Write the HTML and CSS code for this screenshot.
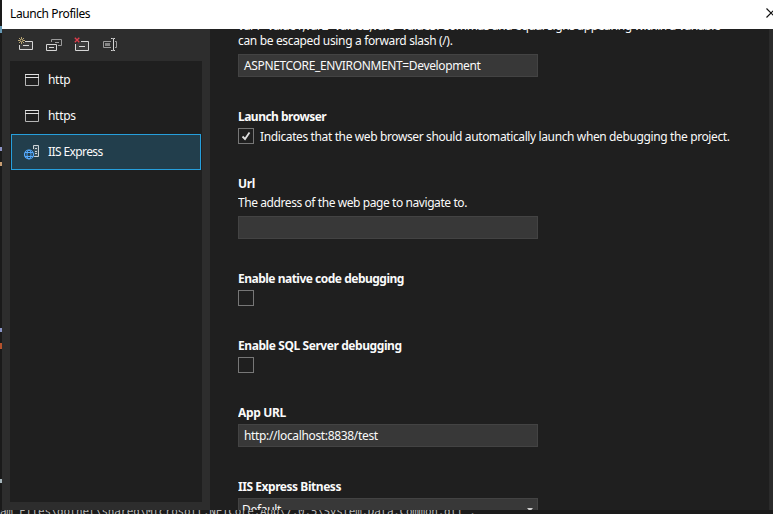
FILE: index.html
```html
<!DOCTYPE html>
<html lang="en">
<head>
<meta charset="utf-8">
<title>Launch Profiles</title>
<link rel="stylesheet" href="styles.css">
</head>
<body>
<div class="edge"><i class="tick t1"></i><i class="tick t2"></i><i class="tick t3"></i><i class="tick t4"></i><i class="tick t5"></i><i class="tick t6"></i></div>
<main class="dialog">
  <header class="titlebar"><span class="title">Launch Profiles</span>
    <svg class="close" width="10" height="10" viewBox="0 0 10 10"><path d="M.5 .5l9 9M9.500 .5l-9 9" stroke="#111" stroke-width="1.200"/></svg>
  </header>
  <div class="content">
    <aside class="sidebar">
      <div class="toolbar">
        <svg width="16" height="16" viewBox="0 0 16 16" fill="none"><path d="M7 4.500h7.500v8H1.500V8" fill="#3b3b3b" stroke="#d6d6d6"/><path d="M5 8.500h6" stroke="#d6d6d6"/><path d="M3.500 0v7M0 3.500h7M1 1l5 5M6 1L1 6" stroke="#dcc487" stroke-width=".8"/><circle cx="3.500" cy="3.500" r="1" fill="#2d2d2d"/></svg>
        <svg width="16" height="16" viewBox="0 0 16 16" fill="none"><path d="M5.500 5V2.500h10v6H12M9 5.500h4" stroke="#9b9b9b"/><path d="M.5 7.500h10v6H.5zM3 10.500h5" fill="#333" stroke="#d6d6d6"/></svg>
        <svg width="16" height="16" viewBox="0 0 16 16" fill="none"><path d="M7 4.500h7.500v9H1.500V7" fill="#3b3b3b" stroke="#d6d6d6"/><path d="M5 9.500h6" stroke="#d6d6d6"/><path d="M.8.8l4.500 4.500M5.300.8L.8 5.300" stroke="#dd3d4c" stroke-width="1.300"/></svg>
        <svg width="16" height="16" viewBox="0 0 16 16" fill="none"><path d="M9 4.500H1.500v6H9M13 4.500h1.500v6H13" stroke="#9b9b9b"/><path d="M3 6h5v3H3z" fill="#858585"/><path d="M9 1.500h1.500l.5.500.500-.5H13M11.500 2v11M9 13.500h1.500l.5-.5.500.5H13" stroke="#d6d6d6"/></svg>
      </div>
      <nav class="profiles">
        <div class="profile"><svg width="16" height="16" viewBox="0 0 16 16" fill="none"><path d="M1.500 2.500h13v11h-13z" stroke="#b5b5b5"/><path d="M1 2.500h14M1 5.500h14" stroke="#e0e0e0"/></svg><span class="http">http</span></div>
        <div class="profile"><svg width="16" height="16" viewBox="0 0 16 16" fill="none"><path d="M1.500 2.500h13v11h-13z" stroke="#b5b5b5"/><path d="M1 2.500h14M1 5.500h14" stroke="#e0e0e0"/></svg><span class="https">https</span></div>
        <div class="profile selected"><svg width="16" height="16" viewBox="0 0 16 16" fill="none"><path d="M9.500 5V1.500h5v11H10" fill="#38505c" stroke="#cdd3d6"/><path d="M11 4.500h2M11 7.500h2M11 9.500h2" stroke="#cdd3d6"/><circle cx="5" cy="10.500" r="5.500" fill="#223e4c"/><circle cx="5" cy="10.500" r="4.500" stroke="#55aaff" stroke-width="1.200"/><ellipse cx="5" cy="10.500" rx="2" ry="4.500" stroke="#55aaff"/><path d="M1 8.500h8M1 12.500h8" stroke="#55aaff"/></svg><span class="iis">IIS Express</span></div>
      </nav>
    </aside>
    <section class="settings">
      <div class="field env">
        <p class="vars">var1=value1,var2=value2,var3=value3. Commas and equal signs appearing within a variable</p>
        <p class="escape">can be escaped using a forward slash (/).</p>
        <div class="input"><span class="aspnet">ASPNETCORE_ENVIRONMENT=Development</span></div>
      </div>
      <div class="field launch">
        <h2 class="h-launch">Launch browser</h2>
        <div class="check"><span class="box"><svg width="14" height="14" viewBox="0 0 14 14"><path d="M3.500 7.500l2.500 2.500L10.500 3.500" fill="none" stroke="#dedede" stroke-width="1.800"/></svg></span><span class="indicates">Indicates that the web browser should automatically launch when debugging the project.</span></div>
      </div>
      <div class="field url">
        <h2 class="h-url">Url</h2>
        <p class="address">The address of the web page to navigate to.</p>
        <div class="input"></div>
      </div>
      <div class="field native"><h2 class="h-native">Enable native code debugging</h2><div class="check"><span class="box"></span></div></div>
      <div class="field sql"><h2 class="h-sql">Enable SQL Server debugging</h2><div class="check"><span class="box"></span></div></div>
      <div class="field app"><h2 class="h-app">App URL</h2><div class="input"><span class="localhost">http://localhost:8838/test</span></div></div>
      <div class="field bitness"><h2 class="h-bit">IIS Express Bitness</h2><div class="input select"><span class="default">Default</span><svg width="6" height="4" viewBox="0 0 6 4"><path d="M0 0h6L3 3.500z" fill="#ccc"/></svg></div></div>
    </section>
    <div class="scroll"></div>
  </div>
</main>
<footer class="output"><span>am Files\dotnet\shared\Microsoft.NETCore.App\7.0.5\System.Data.Common.dll'.</span></footer>
</body>
</html>
```
FILE: styles.css
```css
* { box-sizing: border-box; }
body { margin: 0; width: 773px; height: 514px; overflow: hidden; background: #1b1b1b; color: #fafafa; font: 12px/16px "Noto Sans", "Open Sans", sans-serif; display: grid; grid-template: 510px 4px / 2px 771px; }
p, h2 { margin: 0; font-size: 12px; line-height: 16px; white-space: nowrap; }
span { white-space: nowrap; }
svg { display: block; flex: none; }
.edge { background: #1a1a1a; display: flex; flex-direction: column; }
.tick { width: 2px; height: 4px; background: #6699b5; }
.t1 { margin-top: 26px; height: 7px; }
.t2 { margin-top: 114px; background: #8c92c5; }
.t3 { margin-top: 11px; background: #c89d72; }
.t4 { margin-top: 162px; background: #8994c6; }
.t5 { margin-top: 11px; background: #b6522c; height: 6px; }
.t6 { margin-top: 130px; background: #a7b6bc; }
.dialog { display: flex; flex-direction: column; overflow: hidden; }
.titlebar { height: 29px; background: #fff; color: #000; display: flex; align-items: center; justify-content: space-between; padding-left: 8px; flex: none; overflow: hidden; }
.title { letter-spacing: -0.4px; padding-bottom: 1px; }
.close { margin: -3px -3px 0 0; }
.content { display: flex; height: 481px; overflow: hidden; }
.sidebar { width: 208px; background: #2d2d2d; padding: 0 8px 8px; display: flex; flex-direction: column; }
.toolbar { height: 32px; display: flex; gap: 12px; padding: 8px 0 0 8px; flex: none; }
.profiles { background: #1f1f1f; flex: 1; padding: 1px; }
.profile { height: 36px; display: flex; align-items: center; gap: 8px; padding-left: 13px; }
.http, .https { letter-spacing: -0.3px; }
.iis { letter-spacing: -0.6px; }
.profile.selected { background: #223e4c; border: 1px solid #269fdc; padding-left: 12px; }
.settings { width: 559px; background: #1f1f1f; padding-left: 28px; overflow: hidden; }
.scroll { width: 4px; background: #2b2b2b; }
.field { display: flex; flex-direction: column; overflow: hidden; }
.input { width: 300px; height: 23px; border: 1px solid #434343; background: #383838; padding: 1px 0 0 5px; display: flex; align-items: center; flex: none; }
.env { height: 80px; }
.vars { margin-top: -11px; letter-spacing: -0.39px; }
.escape { margin-top: -1px; letter-spacing: -0.34px; }
.aspnet { letter-spacing: -0.36px; }
.env .input { margin-top: 5px; }
.launch { height: 67px; }
.h-launch { letter-spacing: -0.52px; }
.check { display: flex; height: 16px; gap: 6px; align-items: center; margin-top: 3px; }
.box { width: 16px; height: 16px; border: 1px solid #777; flex: none; }
.indicates { letter-spacing: -0.38px; padding-top: 1px; }
.url { height: 95px; }
.h-url { letter-spacing: -0.3px; }
.address { margin-top: 3px; letter-spacing: -0.42px; }
.url .input { margin-top: 5px; }
.native, .sql { height: 67px; }
.h-native { letter-spacing: -0.5px; }
.h-sql { letter-spacing: -0.42px; }
.h-app { letter-spacing: -0.35px; }
.h-bit { letter-spacing: -0.45px; }
.localhost { letter-spacing: -0.34px; }
.app { height: 74px; }
.app .input, .bitness .input { margin-top: 3px; }
.select { justify-content: space-between; padding: 0 4px 0 3px; }
.default { letter-spacing: -0.3px; }
.bitness { height: 60px; }
.output { grid-column: 1 / 3; overflow: hidden; color: #b8b8b8; font: 11px/14px "DejaVu Sans Mono", monospace; letter-spacing: -0.28px; }
.output span { display: block; margin-top: -5px; }
```
